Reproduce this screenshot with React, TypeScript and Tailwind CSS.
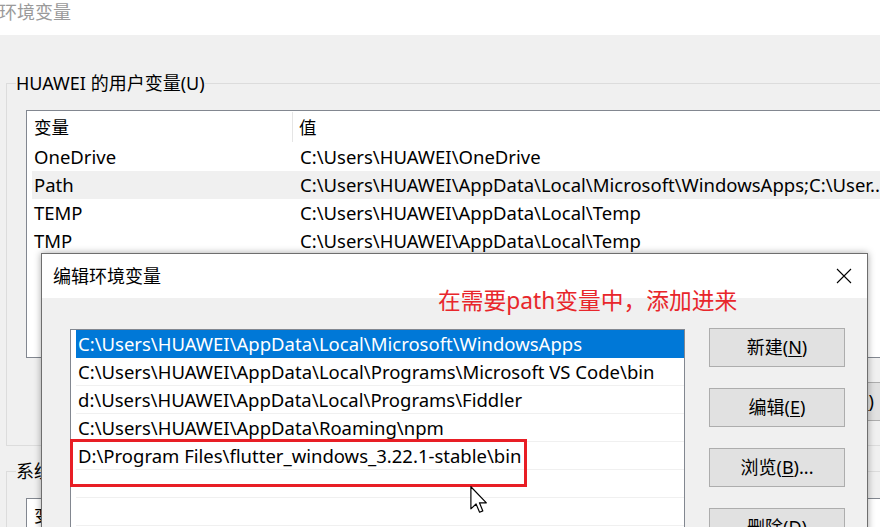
const font = "font-['Noto_Sans','Noto_Sans_CJK_SC',sans-serif]";

const userVars = [
  { name: "OneDrive", value: "C:\\Users\\HUAWEI\\OneDrive" },
  { name: "Path", value: "C:\\Users\\HUAWEI\\AppData\\Local\\Microsoft\\WindowsApps;C:\\User..." },
  { name: "TEMP", value: "C:\\Users\\HUAWEI\\AppData\\Local\\Temp" },
  { name: "TMP", value: "C:\\Users\\HUAWEI\\AppData\\Local\\Temp" },
];

const paths = [
  "C:\\Users\\HUAWEI\\AppData\\Local\\Microsoft\\WindowsApps",
  "C:\\Users\\HUAWEI\\AppData\\Local\\Programs\\Microsoft VS Code\\bin",
  "d:\\Users\\HUAWEI\\AppData\\Local\\Programs\\Fiddler",
  "C:\\Users\\HUAWEI\\AppData\\Roaming\\npm",
  "D:\\Program Files\\flutter_windows_3.22.1-stable\\bin",
  "",
  "",
];

function WinButton({ label, hot, suffix = ")" }: { label: string; hot: string; suffix?: string }) {
  return (
    <div className="w-[136px] h-[39px] bg-[#e1e1e1] border border-[#adadad] flex items-center justify-center text-[18px] text-black">
      {label}(<span className="underline underline-offset-2">{hot}</span>{suffix}
    </div>
  );
}

export default function App() {
  return (
    <div className={`relative w-[880px] h-[527px] overflow-hidden bg-[#f0f0f0] ${font} text-black`}>
      {/* background window */}
      <div className="h-[35px] bg-white text-[18px] leading-[24px] text-[#9a9a9a] -ml-[1px]">环境变量</div>
      <div className="pl-[6px]">
        <fieldset className="mt-[36px] w-[900px] border border-[#dcdcdc] pl-[9px] pb-[24px]">
          <legend className="px-0 text-[18px] leading-[24px]">HUAWEI 的用户变量(U)</legend>
          <div className="mt-[15px] ml-[10px] h-[248px] border border-[#828790] bg-white text-[18.5px]">
            <div className="h-[32px] flex text-[17.5px]">
              <div className="w-[266px] pl-[7px] flex items-center border-r border-[#e5e5e5] my-[1px]">变量</div>
              <div className="pl-[6px] flex items-center">值</div>
            </div>
            {userVars.map((v) => (
              <div
                key={v.name}
                className={`ml-[5px] h-[28px] flex items-center whitespace-nowrap ${v.name === "Path" ? "bg-[#f0f0f0]" : ""}`}
              >
                <div className="w-[261px] pl-[2px]">{v.name}</div>
                <div className="pl-[7px]">{v.value}</div>
              </div>
            ))}
          </div>
          <div className="mt-[24px] ml-[760px] flex gap-[12px]">
            <WinButton label="删除" hot="D" />
          </div>
        </fieldset>
        <fieldset className="mt-[13px] w-[900px] border border-[#dcdcdc] pl-[9px] pb-[24px]">
          <legend className="px-0 text-[18px] leading-[24px]">系统变量(S)</legend>
          <div className="mt-[15px] ml-[10px] h-[200px] border border-[#828790] bg-white text-[17.5px]">
            <div className="h-[32px] flex">
              <div className="w-[266px] pl-[7px] flex items-center">变量</div>
            </div>
          </div>
        </fieldset>
      </div>

      {/* edit dialog */}
      <div className="absolute left-[41px] top-[253px] w-[827px] h-[300px] bg-[#f0f0f0] border border-[#6e6e6e] shadow-[0_0_7px_rgba(0,0,0,0.35)]">
        <div className="h-[44px] bg-white flex items-center justify-between">
          <span className="pl-[11px] text-[18px]">编辑环境变量</span>
          <div className="w-[46px] h-[44px] flex items-center justify-center">
            <svg width="16" height="16" viewBox="0 0 16 16" stroke="#000" strokeWidth="1.1" fill="none">
              <path d="M1 1L15 15M15 1L1 15" />
            </svg>
          </div>
        </div>
        <div className="flex gap-[24px] pl-[28px] pt-[31px]">
          <div className="w-[615px] h-[220px] border border-[#828790] bg-white pl-[5px] text-[18.5px]">
            {paths.map((p, i) => (
              <div
                key={i}
                className={`h-[28px] pl-[2px] flex items-center whitespace-nowrap border-b ${
                  i === 0 ? "bg-[#0078d7] text-white border-[#0078d7]" : "border-[#f0f0f0]"
                }`}
              >
                {p}
              </div>
            ))}
          </div>
          <div className="flex flex-col gap-[21px] -mt-[1px]">
            <WinButton label="新建" hot="N" />
            <WinButton label="编辑" hot="E" />
            <WinButton label="浏览" hot="B" suffix=")..." />
            <WinButton label="删除" hot="D" />
          </div>
        </div>
      </div>

      {/* annotation */}
      <div className="absolute left-[438px] top-[287px] text-[22.75px] leading-[28px] text-[#e8262b] whitespace-nowrap">
        在需要path变量中，添加进来
      </div>
      <div className="absolute left-[70px] top-[439px] w-[457px] h-[48px] border-[3px] border-[#e81e25]" />

      {/* mouse cursor */}
      <svg className="absolute left-[470px] top-[486px]" width="18" height="28" viewBox="0 0 12 19">
        <path
          d="M0.5 0.5L0.5 15.5L4 12.2L6.4 17.8L8.6 16.9L6.3 11.4L11 11.4Z"
          fill="#fff"
          stroke="#000"
          strokeWidth="0.8"
          strokeLinejoin="round"
        />
      </svg>
    </div>
  );
}
